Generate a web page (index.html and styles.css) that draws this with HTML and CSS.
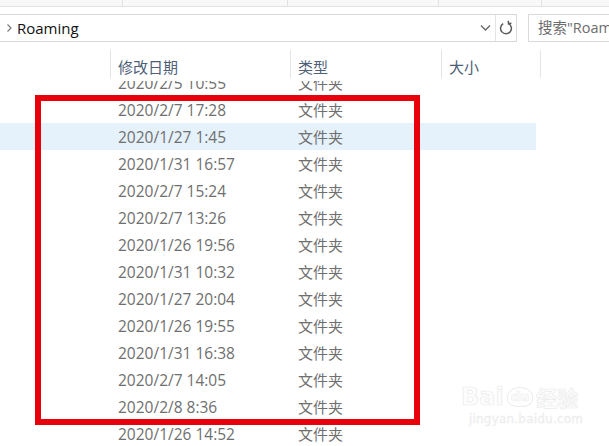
FILE: index.html
```html
<!DOCTYPE html>
<html lang="zh">
<head>
<meta charset="utf-8">
<link rel="stylesheet" href="styles.css">
</head>
<body>
<div class="page">
  <div class="topstrip">
    <span class="tcell c1"></span><span class="tcell c2"></span><span class="tcell c3"></span><span class="tcell c4"></span><span class="tcell c5"></span>
  </div>
  <div class="addrrow">
    <div class="addr">
      <span class="crumb">
        <svg width="7" height="10" viewBox="0 0 7 10"><path d="M1.5 1.5 L5 5 L1.5 8.5" fill="none" stroke="#7a7a7a" stroke-width="1.2"/></svg>
      </span>
      <span class="addrtext">Roaming</span>
      <span class="dd">
        <svg width="11" height="8" viewBox="0 0 11 8"><path d="M1 1.5 L5.5 6 L10 1.5" fill="none" stroke="#6a6a6a" stroke-width="1.4"/></svg>
      </span>
      <span class="refresh">
        <svg width="14" height="16" viewBox="0 0 14 16"><path d="M9.6 3.6 A5.4 5.4 0 1 1 4.2 3.7" fill="none" stroke="#5a5a5a" stroke-width="1.5"/><path d="M9.2 0.8 L9.6 3.8 L12.4 3.2" fill="none" stroke="#5a5a5a" stroke-width="1.5"/></svg>
      </span>
    </div>
    <div class="search">搜索"Roaming"</div>
  </div>
  <div class="header">
    <span class="hcell h0"></span>
    <span class="hcell h1">修改日期</span>
    <span class="hcell h2">类型</span>
    <span class="hcell h3">大小</span>
    <span class="hcell h4"></span>
  </div>
  <div class="list">
    <div class="rows">
      <div class="row first"><span class="date">2020/2/5 10:55</span><span class="type">文件夹</span></div>
      <div class="row"><span class="date">2020/2/7 17:28</span><span class="type">文件夹</span></div>
      <div class="row sel"><span class="date">2020/1/27 1:45</span><span class="type">文件夹</span></div>
      <div class="row"><span class="date">2020/1/31 16:57</span><span class="type">文件夹</span></div>
      <div class="row"><span class="date">2020/2/7 15:24</span><span class="type">文件夹</span></div>
      <div class="row"><span class="date">2020/2/7 13:26</span><span class="type">文件夹</span></div>
      <div class="row"><span class="date">2020/1/26 19:56</span><span class="type">文件夹</span></div>
      <div class="row"><span class="date">2020/1/31 10:32</span><span class="type">文件夹</span></div>
      <div class="row"><span class="date">2020/1/27 20:04</span><span class="type">文件夹</span></div>
      <div class="row"><span class="date">2020/1/26 19:55</span><span class="type">文件夹</span></div>
      <div class="row"><span class="date">2020/1/31 16:38</span><span class="type">文件夹</span></div>
      <div class="row"><span class="date">2020/2/7 14:05</span><span class="type">文件夹</span></div>
      <div class="row"><span class="date">2020/2/8 8:36</span><span class="type">文件夹</span></div>
      <div class="row"><span class="date">2020/1/26 14:52</span><span class="type">文件夹</span></div>
    </div>
  </div>
  <div class="redbox"></div>
  <div class="watermark">
    <div class="wm-top"><span class="wm-bai">Bai</span><span class="wm-paw">du</span><span class="wm-jy">经验</span></div>
    <div class="wm-url">jingyan.baidu.com</div>
  </div>
</div>
</body>
</html>
```
FILE: styles.css
```css
* { box-sizing: border-box; }
html, body { margin: 0; padding: 0; background: #fff; }
body {
  font-family: "Noto Sans CJK SC", "Noto Sans", sans-serif;
  width: 609px;
  height: 446px;
  overflow: hidden;
}
.page {
  position: relative;
  width: 609px;
  height: 446px;
  overflow: hidden;
}
.topstrip {
  height: 7px;
  display: flex;
  background: #f8f8f8;
  border-bottom: 1px solid #e3e3e3;
}
.tcell { height: 100%; border-right: 1px solid #e2e2e2; }
.c1 { width: 123px; }
.c2 { width: 165px; }
.c3 { width: 151px; }
.c4 { width: 103px; }
.c5 { flex: 1; border-right: 0; }

.addrrow {
  margin-top: 7px;
  height: 28px;
  display: flex;
}
.addr {
  width: 518px;
  margin-left: -1px;
  height: 28px;
  border: 1px solid #d9d9d9;
  display: flex;
  align-items: center;
}
.crumb { width: 17px; display: flex; justify-content: center; padding-left: 2px; }
.addrtext { font-family: "Open Sans", "Noto Sans CJK SC", sans-serif; font-size: 15px; color: #111; flex: 1; line-height: 20px; }
.dd { width: 15px; display: flex; align-items: center; }
.refresh {
  width: 21px;
  height: 26px;
  border-left: 1px solid #e4e4e4;
  display: flex;
  align-items: center;
  justify-content: center;
}
.search {
  margin-left: 11px;
  flex: 1;
  height: 28px;
  border: 1px solid #d9d9d9;
  border-right: 0;
  font-family: "Open Sans", "Noto Sans CJK SC", sans-serif;
  font-size: 14.5px;
  color: #6d6d6d;
  padding-left: 9px;
  line-height: 26px;
  white-space: nowrap;
  overflow: hidden;
}

.header {
  margin-top: 8px;
  height: 31px;
  display: flex;
  background: #fff;
  position: relative;
  z-index: 1;
}
.hcell {
  height: 28px;
  font-size: 15px;
  color: #4d6078;
  line-height: 34px;
  padding-left: 7px;
  white-space: nowrap;
}
.h0 { width: 111px; border-right: 1px solid #e5e5e5; }
.h1 { width: 180px; border-right: 1px solid #e5e5e5; }
.h2 { width: 151px; border-right: 1px solid #e5e5e5; }
.h3 { width: 99px; border-right: 1px solid #e5e5e5; }
.h4 { flex: 1; }

.list { height: 365px; overflow: hidden; }
.rows { margin-top: -12px; }
.row {
  width: 536px;
  height: 27px;
  display: flex;
  align-items: center;
  font-family: "Open Sans", "Noto Sans CJK SC", sans-serif;
  font-size: 15.5px;
  color: #6f6f6f;
  white-space: nowrap;
}
.row.sel { background: #e5f1fb; }
.date { width: 298px; padding-left: 118px; }
.type { font-family: "Noto Sans CJK SC", sans-serif; font-size: 15px; }

.redbox {
  position: absolute;
  left: 35px;
  top: 95px;
  width: 385px;
  height: 330px;
  border: 6px solid #e8000b;
}

.watermark {
  position: absolute;
  left: 461px;
  top: 383px;
  color: #fdfdfd;
  font-family: "DejaVu Sans", sans-serif;
  -webkit-text-stroke: 0.7px #ececec;
}
.wm-top { display: flex; align-items: center; font-size: 24px; line-height: 28px; font-weight: bold; }
.wm-paw {
  font-size: 13px;
  border: 1.5px solid #ececec;
  border-radius: 50% 50% 40% 40%;
  padding: 1px 3px;
  margin: 0 3px;
  line-height: 16px;
  -webkit-text-stroke: 0.5px #ececec;
}
.wm-jy { font-family: "Noto Sans CJK SC", sans-serif; font-size: 21px; }
.wm-url { font-size: 12px; letter-spacing: 0.2px; margin-top: 1px; margin-left: 8px; -webkit-text-stroke: 0.3px #ececec; color: #f0f0f0; }
```
